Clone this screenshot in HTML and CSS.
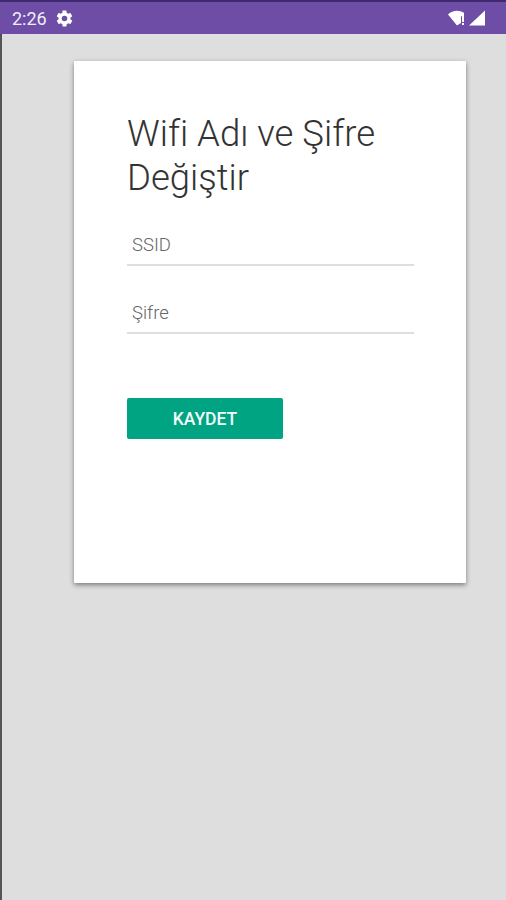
FILE: index.html
```html
<!DOCTYPE html>
<html lang="tr">
<head>
<meta charset="utf-8">
<title>Wifi</title>
<link rel="stylesheet" href="styles.css">
</head>
<body>
<div class="screen">
  <header class="status">
    <div class="status-left">
      <span class="time">2:26</span>
      <svg class="gear" width="19" height="19" viewBox="0 0 24 24"><path fill="#fff" d="M19.4 13c.04-.33.1-.66.1-1s-.06-.67-.1-1l2.100-1.650c.2-.15.25-.42.13-.64l-2-3.460c-.12-.22-.39-.3-.61-.22l-2.490 1c-.52-.4-1.080-.73-1.690-.98l-.38-2.650A.49.49 0 0 0 14 2h-4c-.25 0-.46.18-.49.42l-.38 2.650c-.61.25-1.170.59-1.690.98l-2.490-1c-.23-.09-.49 0-.61.22l-2 3.460c-.13.22-.07.49.12.64L4.600 11c-.04.33-.1.66-.1 1s.06.67.1 1l-2.100 1.650c-.2.15-.25.42-.13.64l2 3.460c.12.22.39.3.61.22l2.490-1c.52.4 1.080.73 1.690.98l.38 2.650c.03.24.24.42.49.42h4c.25 0 .46-.18.49-.42l.38-2.650c.61-.25 1.170-.59 1.690-.98l2.490 1c.23.09.49 0 .61-.22l2-3.460c.12-.22.07-.49-.12-.64L19.400 13zM12 15.500a3.500 3.500 0 1 1 0-7 3.500 3.500 0 0 1 0 7z"/></svg>
    </div>
    <div class="status-right">
      <svg width="20" height="16" viewBox="0 0 20 16"><path fill="#fff" d="M0 4.500C2.500 2 6 .8 9 .8c2.500 0 5 .7 7 2v3.500h-3V13L9 15.500z"/><rect x="14" y="6" width="2" height="6" fill="#fff"/><rect x="14" y="13" width="2" height="2" fill="#fff"/></svg>
      <svg width="18" height="16" viewBox="0 0 18 16"><path fill="#fff" d="M17 .5V15.500H1z"/></svg>
    </div>
  </header>
  <main class="content">
    <section class="card">
      <h1 class="title">Wifi Adı ve Şifre Değiştir</h1>
      <div class="field first"><span class="hint">SSID</span></div>
      <div class="field"><span class="hint">Şifre</span></div>
      <button class="save" type="button">KAYDET</button>
    </section>
  </main>
</div>
</body>
</html>
```
FILE: styles.css
```css
html, body { margin: 0; padding: 0; }
body { width: 506px; height: 900px; overflow: hidden; font-family: Roboto, sans-serif; background: #dedede; }
.screen { height: 900px; display: flex; flex-direction: column; border-left: 2px solid #555; box-sizing: border-box; }
.status { height: 34px; box-sizing: border-box; background: #6e4da6; border-top: 2px solid #3f2a70; margin-left: -2px; padding: 0 20px 0 12px; display: flex; justify-content: space-between; align-items: center; color: #fff; box-shadow: 0 1px 1px rgba(0,0,0,.15); }
.status-left { display: flex; align-items: center; gap: 8px; }
.time { font-size: 18px; color: #f1ecf8; }
.gear { display: block; }
.status-right { display: flex; align-items: center; gap: 0; }
.status-right svg { display: block; }
.content { flex: 1; background: #dedede; padding: 27px 0 0 72px; }
.card { width: 392px; height: 522px; box-sizing: border-box; background: #fff; padding: 51px 52px 0 53px; box-shadow: 0 2px 5px rgba(0,0,0,.45); border-radius: 1px; }
.title { margin: 0; font-weight: 300; font-size: 36.5px; line-height: 44px; color: #333; }
.field { height: 42px; border-bottom: 2px solid #dedede; box-sizing: border-box; padding: 2px 0 0 5px; display: flex; align-items: center; margin-top: 26px; }
.field.first { margin-top: 24px; }
.hint { font-size: 18.500px; font-weight: 300; color: #666; }
.save { display: block; margin-top: 64px; width: 156px; height: 41px; border: 0; border-radius: 2px; background: #00a482; color: #f4fbf9; font-family: Roboto, sans-serif; font-weight: 500; font-size: 17.500px; padding: 0; }
```
